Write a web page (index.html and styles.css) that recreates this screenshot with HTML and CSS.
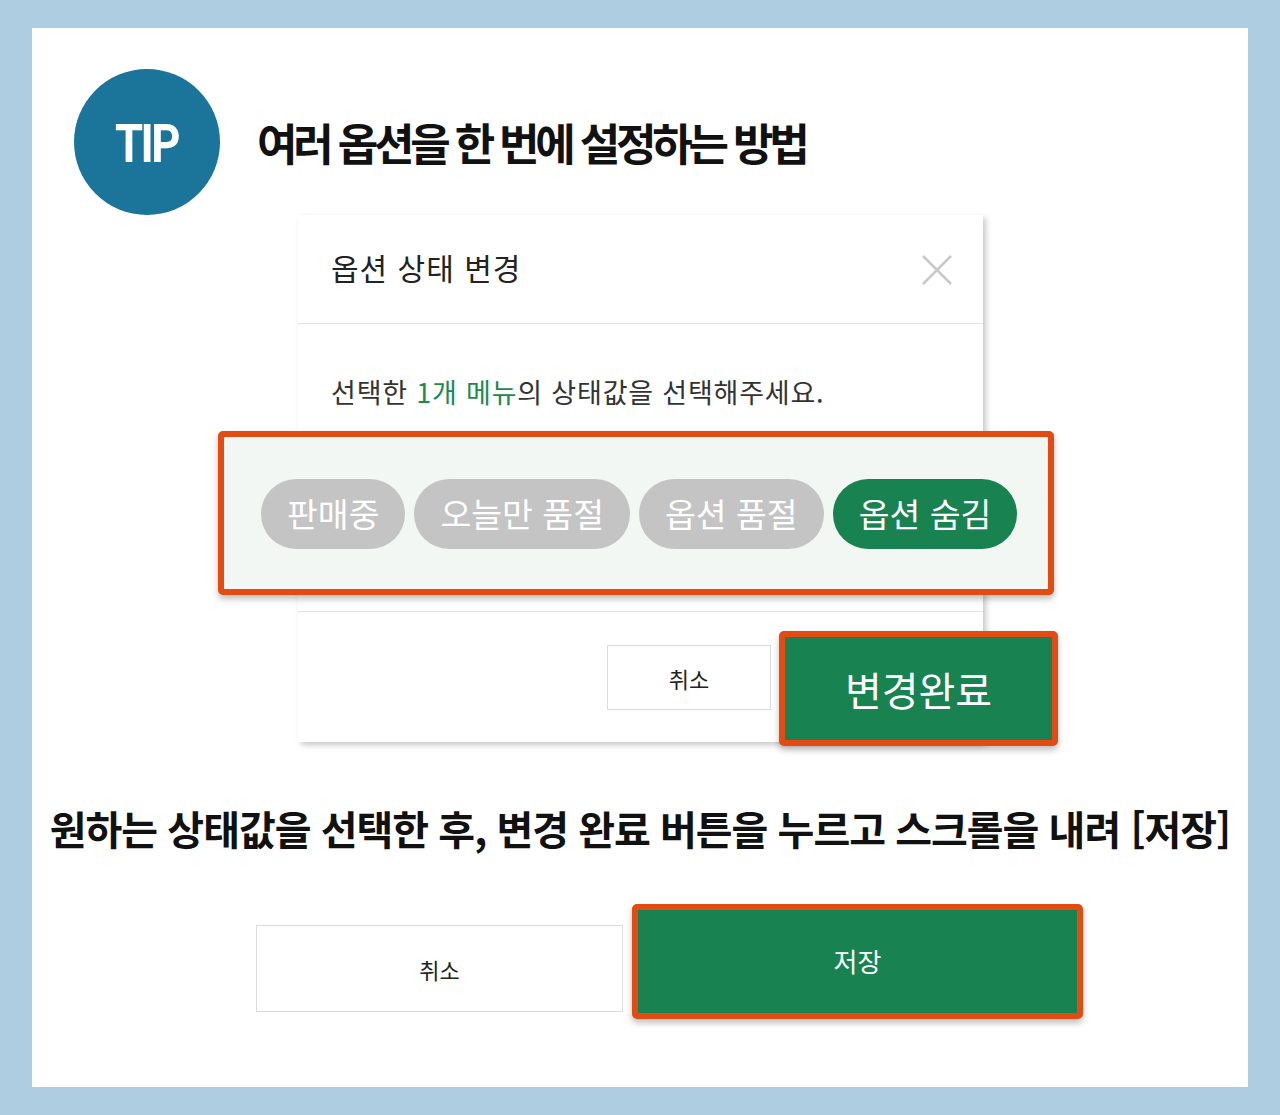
FILE: index.html
```html
<!DOCTYPE html>
<html lang="ko">
<head>
	<meta charset="UTF-8">
	<title>여러 옵션을 한 번에 설정하는 방법</title>
	<link rel="stylesheet" href="styles.css">
</head>
<body>
	<div class="panel">
		<div class="tip-head">
			<div class="tip-badge"><span>TIP</span></div>
			<h1 class="tip-title">여러 옵션을 한 번에 설정하는 방법</h1>
		</div>

		<div class="dialog">
			<div class="dialog-head">
				<span class="dialog-title">옵션 상태 변경</span>
				<svg class="close" width="32" height="32" viewBox="0 0 32 32">
					<path d="M2 2 L30 30 M30 2 L2 30" stroke="#c9c9c9" stroke-width="2.5" fill="none"/>
				</svg>
			</div>
			<div class="dialog-body">
				<p class="guide">선택한 <em>1개 메뉴</em>의 상태값을 선택해주세요.</p>
				<div class="mark status-box">
					<span class="chip">판매중</span>
					<span class="chip">오늘만 품절</span>
					<span class="chip">옵션 품절</span>
					<span class="chip on">옵션 숨김</span>
				</div>
			</div>
			<div class="dialog-foot">
				<button type="button" class="btn-cancel small">취소</button>
				<button type="button" class="mark btn-ok big">변경완료</button>
			</div>
		</div>

		<p class="step">원하는 상태값을 선택한 후, 변경 완료 버튼을 누르고 스크롤을 내려 [저장]</p>

		<div class="save-row">
			<button type="button" class="btn-cancel wide">취소</button>
			<button type="button" class="mark btn-ok save">저장</button>
		</div>
	</div>
</body>
</html>
```

FILE: styles.css
```css
* {
	margin: 0;
	padding: 0;
	box-sizing: border-box;
}

body {
	background: #afcde1;
	padding: 28px 32px;
	font-family: "Noto Sans CJK KR", "Noto Sans", sans-serif;
	color: #222;
}

.panel {
	background: #fff;
	height: 1059px;
	padding-top: 41px;
}

.tip-head {
	display: flex;
	align-items: center;
	padding-left: 42px;
}

.tip-badge {
	width: 146px;
	height: 146px;
	border-radius: 50%;
	background: #1b7499;
	color: #fff;
	display: flex;
	align-items: center;
	justify-content: center;
	font-family: "Roboto", "Liberation Sans", sans-serif;
	font-weight: bold;
	font-size: 54px;
	letter-spacing: -3px;
	padding-top: 2px;
}

.tip-badge span {
	display: inline-block;
	transform: scaleX(0.84);
}

.tip-title {
	margin-left: 37px;
	font-size: 44px;
	font-weight: bold;
	letter-spacing: -4.2px;
	color: #111;
}

.dialog {
	width: 685px;
	margin-left: 266px;
	background: #fff;
	box-shadow: 3px 3px 6px rgba(0, 0, 0, .22);
}

.dialog-head {
	height: 109px;
	display: flex;
	align-items: center;
	justify-content: space-between;
	padding: 0 30px 0 33px;
	border-bottom: 1px solid #e2e2e2;
}

.dialog-title {
	font-size: 30px;
	letter-spacing: 1px;
	color: #222;
	padding-bottom: 4px;
}

.close {
	margin-top: 2px;
}

.dialog-body {
	padding-top: 50px;
	border-bottom: 1px solid #e2e2e2;
	padding-bottom: 16px;
}

.guide {
	padding-left: 33px;
	font-size: 27px;
	letter-spacing: 0.8px;
	line-height: 36px;
	color: #333;
	margin-bottom: 21px;
}

.guide em {
	font-style: normal;
	color: #1b8a50;
}

.mark {
	border: 6px solid #e34b12;
	border-radius: 5px;
	box-shadow: 0 4px 6px rgba(0, 0, 0, .25);
}

.status-box {
	margin-left: -80px;
	width: 836px;
	height: 164px;
	background: #f2f7f4;
	display: flex;
	align-items: center;
	gap: 9px;
	padding-left: 37px;
	padding-top: 2px;
}

.chip {
	height: 70px;
	border-radius: 35px;
	background: #c4c4c4;
	color: #fff;
	font-size: 33.5px;
	line-height: 68px;
	padding: 0 26px;
	white-space: nowrap;
}

.chip.on {
	background: #198251;
}

.dialog-foot {
	display: flex;
	justify-content: flex-end;
	align-items: flex-start;
	padding-top: 19px;
	height: 130px;
	gap: 8px;
}

.btn-cancel {
	background: #fff;
	border: 1px solid #dcdcdc;
	font-family: inherit;
	font-size: 22px;
	color: #222;
}

.btn-cancel.small {
	width: 164px;
	height: 65px;
	margin-top: 14px;
}

.btn-ok {
	background: #198251;
	color: #fff;
	font-family: inherit;
}

.btn-ok.big {
	width: 279px;
	height: 115px;
	margin-right: -75px;
	font-size: 40px;
}

.step {
	margin-top: 58px;
	text-align: center;
	font-size: 40px;
	line-height: 56px;
	font-weight: bold;
	letter-spacing: -1px;
	color: #111;
}

.save-row {
	display: flex;
	align-items: flex-start;
	gap: 9px;
	margin-top: 48px;
	padding-left: 224px;
}

.btn-cancel.wide {
	width: 367px;
	height: 87px;
	margin-top: 21px;
}

.btn-ok.save {
	width: 451px;
	height: 115px;
	font-size: 26px;
	padding-bottom: 2px;
}
```
